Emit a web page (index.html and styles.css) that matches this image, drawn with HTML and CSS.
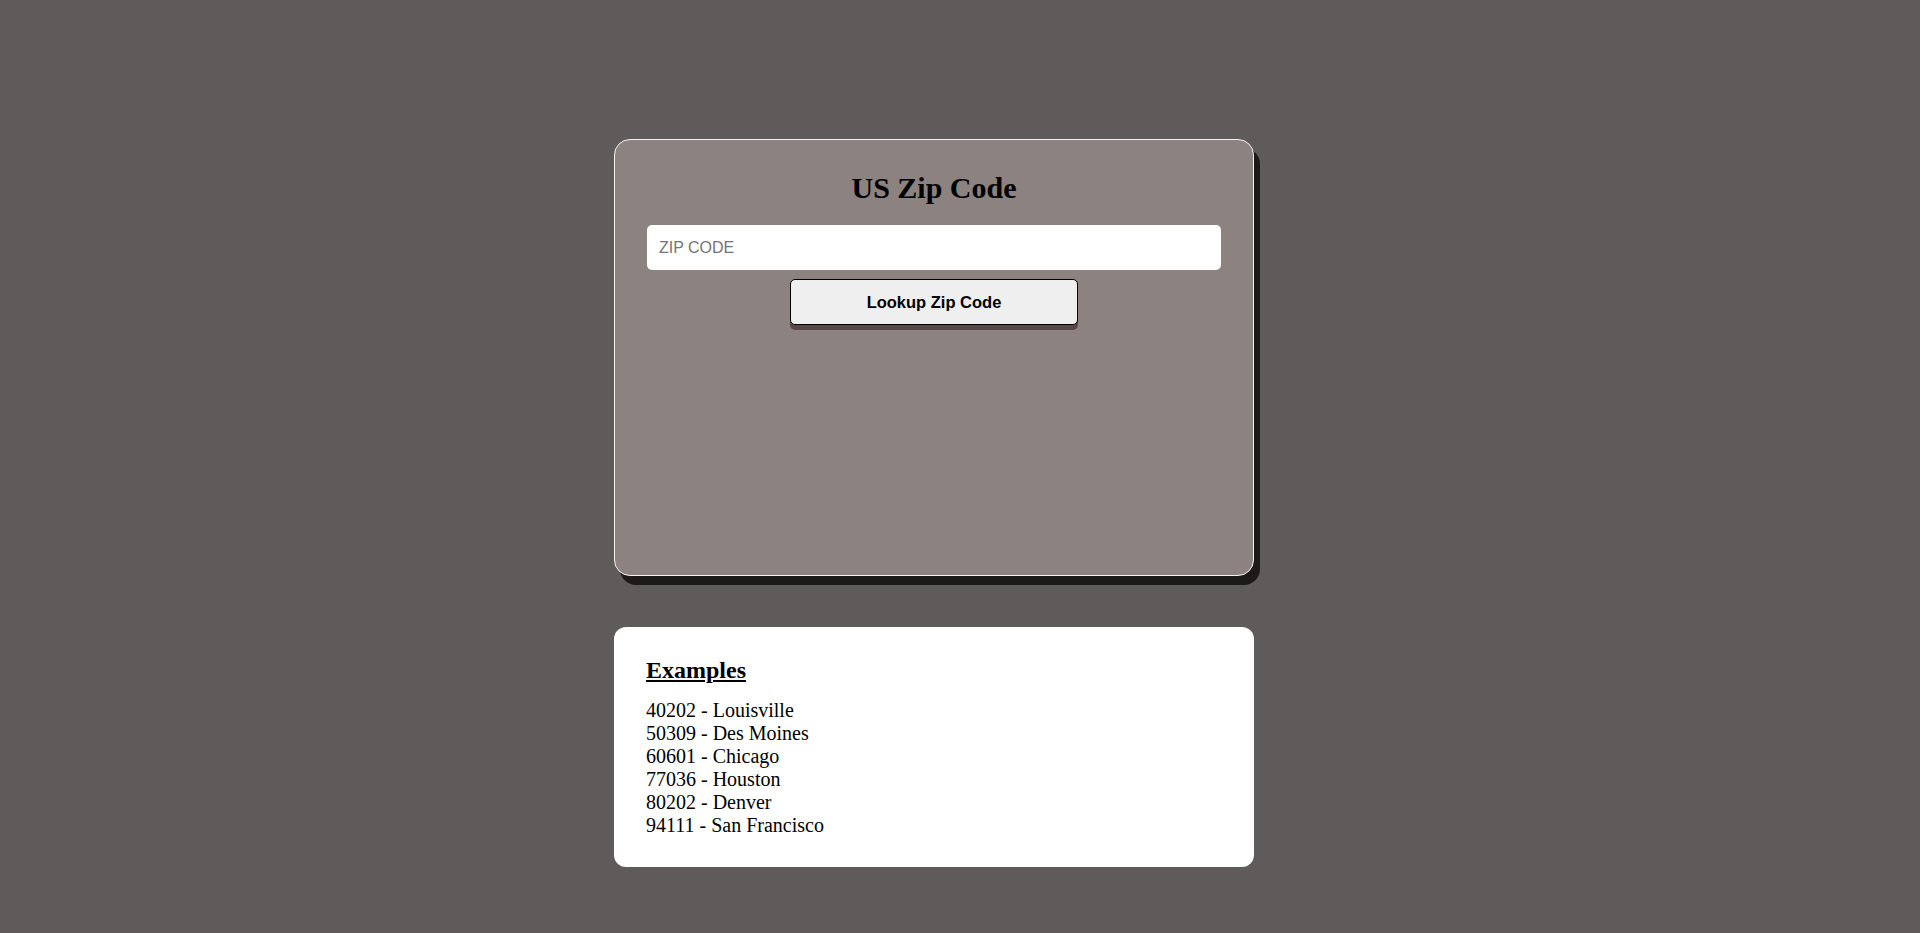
FILE: index.html
```html
<!DOCTYPE html>
<html lang="en">
<head>
  <meta charset="UTF-8" />
  <meta name="viewport" content="width=device-width, initial-scale=1.0"/>
  <title>US Zip Code</title>
  <link rel="stylesheet" href="styles.css">
</head>
<body>

<main class="wrap">
  <section class="lookup-card">
    <h1>US Zip Code</h1>
    <input type="text" class="zip-input" placeholder="ZIP CODE">
    <button class="lookup-btn">Lookup Zip Code</button>
    <div class="result"></div>
  </section>

  <section class="examples">
    <h2>Examples</h2>
    <div class="ex-line">40202 - Louisville</div>
    <div class="ex-line">50309 - Des Moines</div>
    <div class="ex-line">60601 - Chicago</div>
    <div class="ex-line">77036 - Houston</div>
    <div class="ex-line">80202 - Denver</div>
    <div class="ex-line">94111 - San Francisco</div>
  </section>
</main>

</body>
</html>
```

FILE: styles.css
```css
body {
  margin: 0;
  padding-right: 52px;
  background-color: #5f5b5a;
  font-family: "Liberation Serif", "Times New Roman", serif;
}

.wrap {
  width: 640px;
  margin: 0 auto;
  padding-top: 139px;
}

.lookup-card {
  box-sizing: border-box;
  height: 437px;
  background: #8c8381;
  border: 1px solid #f2f2f2;
  border-radius: 16px;
  box-shadow: 6px 9px 0 #1c1a19;
  padding: 31px 32px 30px;
  display: flex;
  flex-direction: column;
  align-items: center;
}

.lookup-card h1 {
  font-size: 30px;
  margin: 0 0 20px;
  color: #000;
}

.zip-input {
  box-sizing: border-box;
  width: 100%;
  height: 45px;
  border: none;
  border-radius: 5px;
  padding: 0 12px;
  font-family: "Liberation Sans", Arial, sans-serif;
  font-size: 16px;
  outline: none;
}

.zip-input::placeholder {
  color: #757575;
}

.lookup-btn {
  margin-top: 9px;
  width: 288px;
  height: 46px;
  background: #efefef;
  border: 1px solid #000;
  border-radius: 5px;
  box-shadow: 0 5px 0 #5a4646;
  font-family: "Liberation Sans", Arial, sans-serif;
  font-weight: bold;
  font-size: 16.5px;
  color: #000;
  cursor: pointer;
}

.examples {
  margin-top: 51px;
  background: #fff;
  border-radius: 12px;
  padding: 30px 32px;
  font-size: 20px;
}

.examples h2 {
  font-size: 24px;
  text-decoration: underline;
  margin: 0 0 15px;
}

.ex-line {
  line-height: 23px;
}
```
